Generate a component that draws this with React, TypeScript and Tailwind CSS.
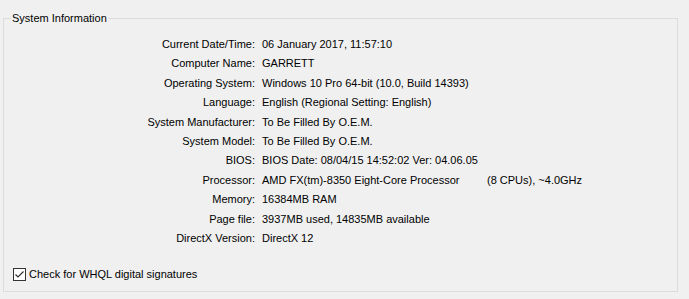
import React from "react";

const rows: [string, React.ReactNode][] = [
  ["Current Date/Time:", "06 January 2017, 11:57:10"],
  ["Computer Name:", "GARRETT"],
  ["Operating System:", "Windows 10 Pro 64-bit (10.0, Build 14393)"],
  ["Language:", "English (Regional Setting: English)"],
  ["System Manufacturer:", "To Be Filled By O.E.M."],
  ["System Model:", "To Be Filled By O.E.M."],
  ["BIOS:", "BIOS Date: 08/04/15 14:52:02 Ver: 04.06.05"],
  [
    "Processor:",
    <>
      <span className="inline-block w-[225px]">AMD FX(tm)-8350 Eight-Core Processor</span>
      <span>(8 CPUs), ~4.0GHz</span>
    </>,
  ],
  ["Memory:", "16384MB RAM"],
  ["Page file:", "3937MB used, 14835MB available"],
  ["DirectX Version:", "DirectX 12"],
];

export default function App() {
  return (
    <div
      className="w-[689px] h-[299px] bg-[#f0f0f0] text-[#000000] text-[11px] pt-[10px] overflow-hidden"
      style={{ fontFamily: '"Liberation Sans", Arial, sans-serif' }}
    >
      <fieldset className="ml-[3px] w-[675px] h-[282px] border border-[#dcdcdc] flex flex-col">
        <legend className="ml-[7px] px-[1px] leading-[16px]">System Information</legend>
        <div className="pt-[9px] grid grid-cols-[251px_1fr] gap-x-[7px]">
          {rows.map(([label, value], i) => (
            <React.Fragment key={i}>
              <div className="text-right leading-[19.4px] whitespace-nowrap">{label}</div>
              <div className="leading-[19.4px] whitespace-nowrap">{value}</div>
            </React.Fragment>
          ))}
        </div>
        <label className="mt-[18px] ml-[9px] flex items-center gap-[3px] leading-[16px]">
          <span className="w-[13px] h-[13px] border border-[#333333] bg-white flex items-center justify-center">
            <svg width="11" height="11" viewBox="0 0 11 11">
              <path d="M1.5 5.5 L4 8 L9.5 2.5" fill="none" stroke="#333333" strokeWidth="1.2" />
            </svg>
          </span>
          <span>Check for WHQL digital signatures</span>
        </label>
      </fieldset>
    </div>
  );
}
